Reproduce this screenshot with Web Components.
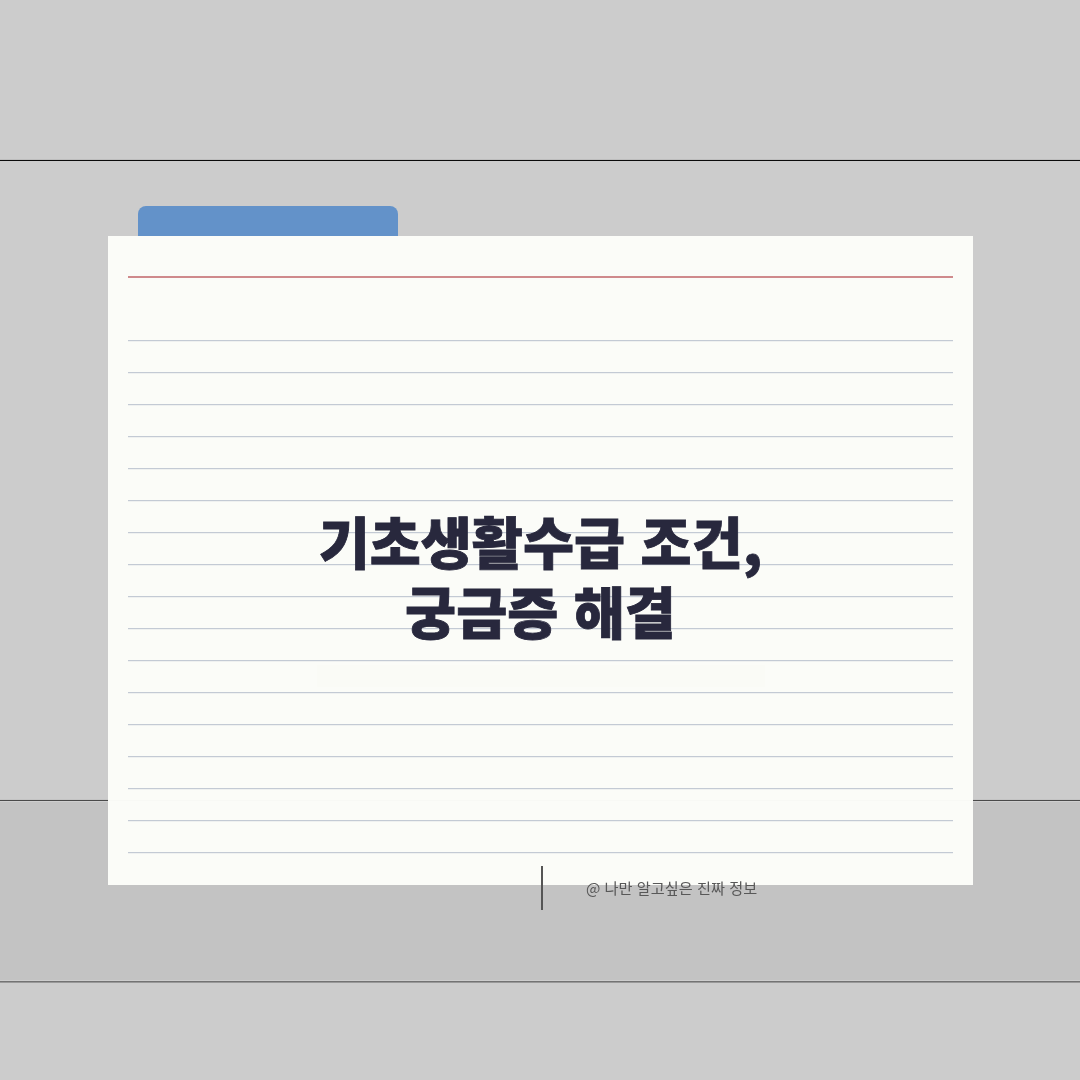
<!DOCTYPE html>
<html lang="ko"><head><meta charset="utf-8">
<style>html,body{margin:0;padding:0}body{width:1080px;height:1080px;overflow:hidden;background:#ccc;font-family:"Noto Sans CJK KR","Noto Sans",sans-serif}</style>
</head><body>
<cover-stage>
  <cover-backdrop slot="back"></cover-backdrop>
  <note-sheet slot="front">
    <h-title>기초생활수급 조건,<br>궁금증 해결</h-title>
  </note-sheet>
</cover-stage>
<script>
function def(name, html){
  customElements.define(name, class extends HTMLElement{
    constructor(){super();this.attachShadow({mode:'open'}).innerHTML=html;}
  });
}
def('cover-stage',`<style>
:host{display:grid;width:1080px;height:1080px}
.l{grid-area:1/1;display:block}
</style><div class="l"><slot name="back"></slot></div><div class="l"><slot name="front"></slot></div>`);
def('cover-backdrop',`<style>
:host{display:flex;flex-direction:column;width:1080px;height:1080px}
.top{height:159px;background:#ccc;flex:none}
.rule{height:1px;flex:none}
.mid{height:638px;background:#ccc;flex:none}
.band{height:178px;background:#c3c3c3;flex:none;display:flex;box-sizing:border-box;padding:64px 0 0 541px;gap:43px;align-items:flex-start}
.div{width:2px;height:44px;background:#555;filter:blur(.5px)}
.by{font-size:15.2px;line-height:22px;margin-top:10px;color:#585858;filter:blur(.7px);white-space:nowrap}
.end{flex:1;background:#ccc}
</style>
<div class="top"></div><div class="rule" style="background:#bdbdbd"></div><div class="rule" style="background:#0a0a0a"></div>
<div class="mid"></div><div class="rule" style="background:#c4c4c4"></div><div class="rule" style="background:#4a4a4a"></div><div class="rule" style="background:#cfcfcf"></div>
<div class="band"><div class="div"></div><div class="by">@ 나만 알고싶은 진짜 정보</div></div>
<div class="rule" style="background:#cdcdcd"></div><div class="rule" style="background:#737373"></div><div class="rule" style="background:#999"></div><div class="end"></div>`);
def('note-sheet',`<style>
:host{display:flex;flex-direction:column;width:1080px;height:1080px;box-sizing:border-box;padding:206px 107px 0 108px}
.tab{flex:none;width:260px;height:30px;margin-left:30px;background:#6392c9;border-radius:8px 8px 0 0}
.paper{flex:none;height:649px;box-sizing:border-box;background:rgba(252,253,249,.975);padding:40px 20px 0;display:grid}
.lines{grid-area:1/1;display:flex;flex-direction:column}
.red{height:2px;background:#cf8a8c;flex:none;margin-bottom:62px}
.b{height:1px;background:#c3cad4;flex:none;margin-bottom:31px;box-shadow:0 .5px 0 rgba(195,202,212,.4)}
.c{grid-area:1/1;display:flex;flex-direction:column;align-items:center;box-sizing:border-box;padding-top:229px}
.strip{width:448px;height:22px;margin-top:20px;background:rgba(120,120,60,.008)}
</style>
<div class="tab"></div>
<div class="paper">
  <div class="lines"><div class="red"></div>
  ${'<div class="b"></div>'.repeat(17)}</div>
  <div class="c"><slot></slot><div class="strip"></div></div>
</div>`);
def('h-title',`<style>
:host{display:block;font-family:"Noto Sans CJK KR",sans-serif;font-weight:900;font-size:55.5px;line-height:70px;color:#28283d;-webkit-text-stroke:.8px #28283d;text-align:center;white-space:nowrap}
</style><slot></slot>`);
</script>
</body></html>
